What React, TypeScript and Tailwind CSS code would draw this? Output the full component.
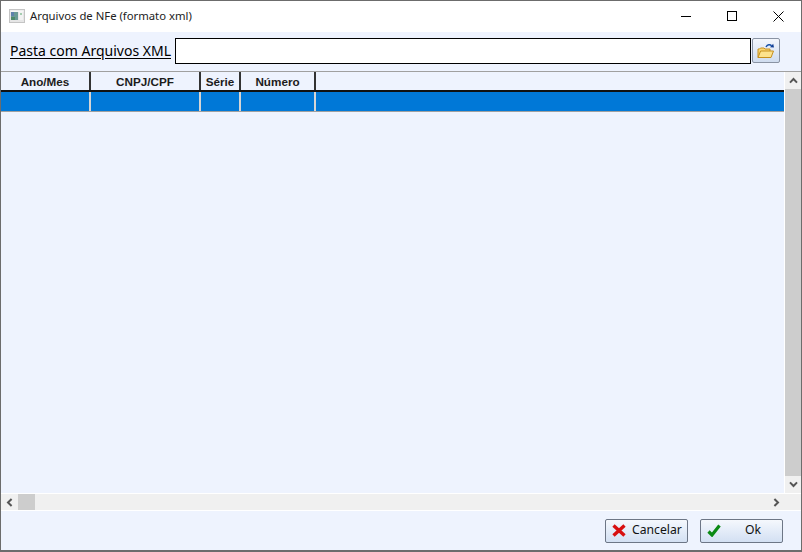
const sans = "font-['Liberation_Sans',Arial,sans-serif]";
const ui = "font-['Noto_Sans','Open_Sans',sans-serif]";

const columns = [
  { label: "Ano/Mes", width: "w-[90px]" },
  { label: "CNPJ/CPF", width: "w-[110px]" },
  { label: "Série", width: "w-[40px]" },
  { label: "Número", width: "w-[75px]" },
];

function Chevron({ dir }: { dir: "up" | "down" | "left" | "right" }) {
  const rotate = {
    up: "rotate-0",
    down: "rotate-180",
    left: "-rotate-90",
    right: "rotate-90",
  }[dir];
  return (
    <svg viewBox="0 0 9 7" className={`w-[9px] h-[7px] ${rotate}`}>
      <path d="M1 5.6 L4.5 2 L8 5.6" fill="none" stroke="#555" strokeWidth="2" />
    </svg>
  );
}

function AppIcon() {
  return (
    <svg viewBox="0 0 16 14" className="w-4 h-[14px]">
      <rect x="0.5" y="0.5" width="15" height="13" fill="#e6e6e6" stroke="#c4c4c4" />
      <rect x="1.5" y="1.5" width="13" height="1.5" fill="#f6f6f6" />
      <rect x="2" y="3" width="7" height="8" fill="#6a9a96" />
      <rect x="2" y="3" width="3" height="4" fill="#5f82ac" />
      <rect x="2" y="8" width="4" height="3" fill="#4f8a6a" />
      <rect x="10" y="3" width="4" height="8" fill="#f2f2f2" />
      <rect x="11" y="4" width="2" height="2" fill="#a5cdb0" />
    </svg>
  );
}

function FolderIcon() {
  return (
    <svg viewBox="0 0 18 16" className="w-[18px] h-4">
      <path d="M9 4 C10.5 1.3 13 1 14.6 2.8" fill="none" stroke="#1550a8" strokeWidth="1.5" />
      <path d="M13 4.2 L17 4.6 L16.2 0.8 Z" fill="#123f95" />
      <path d="M1 14.5 V6 H2.5 L3.5 5 H7 L8 6 H13 V8" fill="#f9d673" stroke="#c68f1c" />
      <path d="M1 14.5 L3.6 8 H16.5 L14 14.5 Z" fill="#fde28c" stroke="#c68f1c" />
    </svg>
  );
}

function CancelIcon() {
  return (
    <svg viewBox="0 0 14 13" className="ml-[6px] w-[14px] h-[13px]">
      <path d="M1.5 1.5 L12.5 11.5 M12.5 1.5 L1.5 11.5" stroke="#d80f0f" strokeWidth="3.4" />
    </svg>
  );
}

function OkIcon() {
  return (
    <svg viewBox="0 0 14 13" className="ml-[6px] w-[14px] h-[13px]">
      <path d="M1.5 7.5 L5 11 L12.5 1.5" fill="none" stroke="#0b8a14" strokeWidth="3.2" />
    </svg>
  );
}

function DialogButton({ label, icon, labelClass }: { label: string; icon: React.ReactNode; labelClass: string }) {
  return (
    <button className={`w-[83px] h-6 flex items-center border border-[#6d7686] rounded-[2px] bg-gradient-to-b from-[#f5f8fd] to-[#d3e0f3] text-[12.2px] text-[#111] ${ui}`}>
      {icon}
      <span className={labelClass}>{label}</span>
    </button>
  );
}

export default function App() {
  return (
    <div className="w-[802px] h-[552px] flex flex-col bg-[#eef3fe] border-x border-t border-b-2 border-[#6c6c6c] overflow-hidden">
      {/* Title bar */}
      <div className="h-[31px] shrink-0 bg-white flex items-center pb-[1px]">
        <div className="ml-[8px] flex items-center">
          <AppIcon />
        </div>
        <span className={`ml-[5px] text-[11.3px] text-[#222] ${ui}`}>Arquivos de NFe (formato xml)</span>
        <div className="ml-auto flex items-center">
          <div className="w-[46px] flex justify-center">
            <div className="w-[10px] h-px bg-black" />
          </div>
          <div className="w-[46px] flex justify-center">
            <div className="w-[10px] h-[10px] border border-black" />
          </div>
          <div className="w-[46px] flex justify-center">
            <svg viewBox="0 0 11 11" className="w-[11px] h-[11px]">
              <path d="M0.5 0.5 L10.5 10.5 M10.5 0.5 L0.5 10.5" stroke="#000" strokeWidth="1" />
            </svg>
          </div>
        </div>
      </div>

      {/* Folder row */}
      <div className="h-[40px] shrink-0 flex items-center pl-[9px] pb-[1px] border-b border-[#a0a0a0]">
        <span className={`w-[163px] whitespace-nowrap text-[14px] leading-5 underline underline-offset-2 text-black ${ui}`}>Pasta com Arquivos XML</span>
        <div className="ml-[2px] w-[576px] h-[26px] bg-white border border-black" />
        <button className="ml-[1px] self-start mt-[6px] w-[28px] h-[25px] flex items-center justify-center border border-[#8a93a3] rounded-[2px] bg-gradient-to-b from-[#f3f6fc] to-[#cfdcef]">
          <FolderIcon />
        </button>
      </div>

      {/* Grid */}
      <div className="flex-1 min-h-0 flex">
        <div className="flex-1 min-w-0 flex flex-col">
          <div className="h-[20px] shrink-0 flex border-b-2 border-[#111]">
            {columns.map((c) => (
              <div
                key={c.label}
                className={`${c.width} flex items-center justify-center pt-px border-r-2 border-[#333] text-[11.7px] font-bold text-[#1c1c1c] ${sans}`}
              >
                {c.label}
              </div>
            ))}
          </div>
          <div className="h-[20px] shrink-0 flex bg-[#0078d7] border-b border-[#a0a0a0]">
            {columns.map((c) => (
              <div key={c.label} className={`${c.width} border-r-2 border-[#d5d5d5]`} />
            ))}
          </div>
          <div className="flex-1 min-h-0" />
        </div>
        {/* Vertical scrollbar */}
        <div className="w-[16px] shrink-0 flex flex-col bg-[#cdcdcd] border-l border-white box-content">
          <div className="h-[17px] bg-[#f0f0f0] flex items-center justify-center">
            <Chevron dir="up" />
          </div>
          <div className="flex-1" />
          <div className="h-[17px] bg-[#f0f0f0] flex items-center justify-center">
            <Chevron dir="down" />
          </div>
        </div>
      </div>

      {/* Horizontal scrollbar */}
      <div className="h-[18px] shrink-0 flex items-center bg-[#f0f0f0] border-y border-white">
        <div className="w-[17px] flex justify-center">
          <Chevron dir="left" />
        </div>
        <div className="w-[17px] h-full bg-[#cdcdcd]" />
        <div className="ml-auto w-[16px] mr-[17px] flex justify-center">
          <Chevron dir="right" />
        </div>
      </div>

      {/* Buttons */}
      <div className="h-[39px] shrink-0 flex items-center justify-end gap-[12px] pr-[18px]">
        <DialogButton label="Cancelar" labelClass="ml-[6px]" icon={<CancelIcon />} />
        <DialogButton label="Ok" labelClass="ml-[24px]" icon={<OkIcon />} />
      </div>
    </div>
  );
}
